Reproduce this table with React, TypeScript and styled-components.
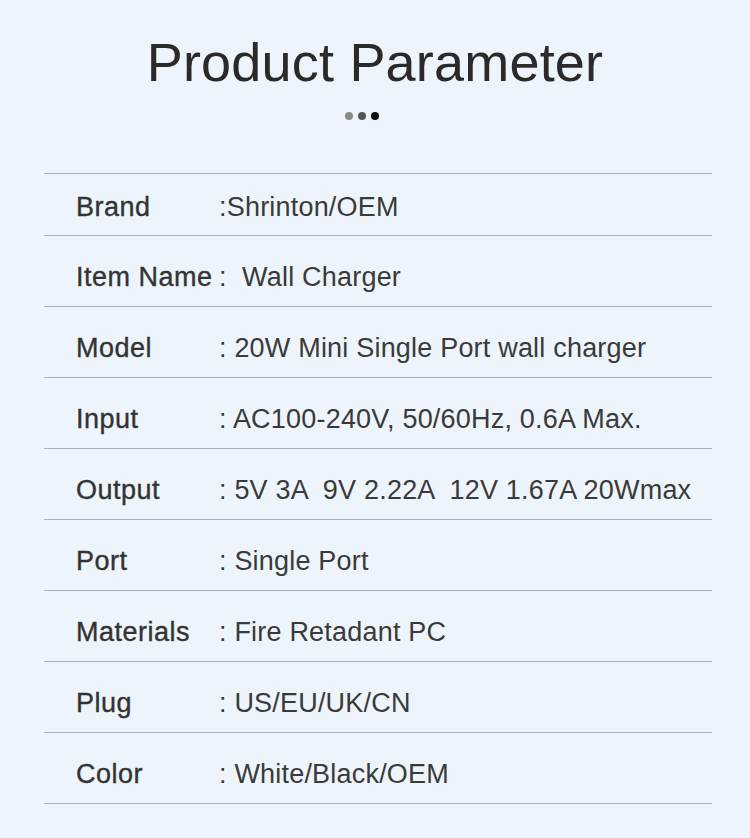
import React from "react";
import styled, { createGlobalStyle } from "styled-components";

const GlobalStyle = createGlobalStyle`
  html, body {
    margin: 0;
    padding: 0;
    background: #eef4fb;
  }
  body {
    font-family: "Liberation Sans", Arial, sans-serif;
  }
`;

const Page = styled.div`
  width: 750px;
  height: 838px;
  background: #eef4fb;
  display: flex;
  flex-direction: column;
  align-items: center;
  overflow: hidden;
`;

const Title = styled.h1`
  margin: 26px 0 0;
  font-size: 54px;
  font-weight: 400;
  line-height: 72px;
  color: #2a2a2a;
  letter-spacing: 0.2px;
`;

const Dots = styled.div`
  display: flex;
  gap: 5px;
  margin: 14px 26px 0 0;
`;

const Dot = styled.span<{ $color: string }>`
  width: 8px;
  height: 8px;
  border-radius: 50%;
  background: ${(p) => p.$color};
`;

const Table = styled.div`
  align-self: flex-start;
  width: 668px;
  margin: 53px 0 0 44px;
  border-top: 1px solid #a9b0b9;
`;

const Row = styled.div<{ $first?: boolean }>`
  display: flex;
  align-items: center;
  box-sizing: border-box;
  height: ${(p) => (p.$first ? 62 : 71)}px;
  padding: ${(p) => (p.$first ? 6 : 13)}px 0 0 32px;
  border-bottom: 1px solid #a9b0b9;
`;

const Label = styled.div`
  width: 143px;
  flex-shrink: 0;
  font-size: 27px;
  letter-spacing: 0.5px;
  color: #333;
  -webkit-text-stroke: 0.35px #333;
  white-space: nowrap;
`;

const Value = styled.div`
  font-size: 27px;
  letter-spacing: 0.2px;
  color: #3a3a3a;
  white-space: pre;
`;

const params: [string, string][] = [
  ["Brand", ":Shrinton/OEM"],
  ["Item Name", ":  Wall Charger"],
  ["Model", ": 20W Mini Single Port wall charger"],
  ["Input", ": AC100-240V, 50/60Hz, 0.6A Max."],
  ["Output", ": 5V 3A  9V 2.22A  12V 1.67A 20Wmax"],
  ["Port", ": Single Port"],
  ["Materials", ": Fire Retadant PC"],
  ["Plug", ": US/EU/UK/CN"],
  ["Color", ": White/Black/OEM"],
];

export default function App() {
  return (
    <Page>
      <GlobalStyle />
      <Title>Product Parameter</Title>
      <Dots>
        <Dot $color="#8a8a8a" />
        <Dot $color="#555" />
        <Dot $color="#0d0d0d" />
      </Dots>
      <Table>
        {params.map(([label, value], i) => (
          <Row key={label} $first={i === 0}>
            <Label>{label}</Label>
            <Value>{value}</Value>
          </Row>
        ))}
      </Table>
    </Page>
  );
}
